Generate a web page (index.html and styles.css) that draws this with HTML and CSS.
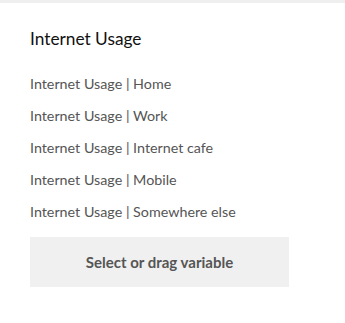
FILE: index.html
```html
<!DOCTYPE html>
<html lang="en">
<head>
    <meta charset="UTF-8">
    <meta name="viewport" content="width=device-width, initial-scale=1.0">
    <title>Internet Usage</title>
    <link rel="stylesheet" href="styles.css">
</head>
<body>
    <div class="top-bar"></div>

    <!-- variable panel -->
    <div class="panel">
        <h2 class="panel-title">Internet Usage</h2>
        <ul class="var-list">
            <li>Internet Usage | Home</li>
            <li>Internet Usage | Work</li>
            <li>Internet Usage | Internet cafe</li>
            <li>Internet Usage | Mobile</li>
            <li>Internet Usage | Somewhere else</li>
        </ul>
        <div class="drop-zone">Select or drag variable</div>
    </div>
</body>
</html>
```

FILE: styles.css
```css
* {
    margin: 0;
    padding: 0;
    box-sizing: border-box;
    font-family: Lato, 'Open Sans', Arial, sans-serif;
}

body {
    background: #fff;
    color: #555;
}

.top-bar {
    height: 3px;
    background-color: #efefef;
}

.panel {
    padding: 26px 56px 0 30px;
}

.panel-title {
    font-size: 17.3px;
    font-weight: normal;
    color: #111;
    line-height: 20px;
    margin-bottom: 19px;
}

.var-list {
    list-style: none;
}

.var-list li {
    font-size: 14.3px;
    line-height: 32px;
    color: #555;
}

.drop-zone {
    margin-top: 9px;
    height: 50px;
    display: flex;
    align-items: center;
    justify-content: center;
    background-color: #f0f0f0;
    font-size: 15px;
    font-weight: bold;
    color: #555;
}
```
